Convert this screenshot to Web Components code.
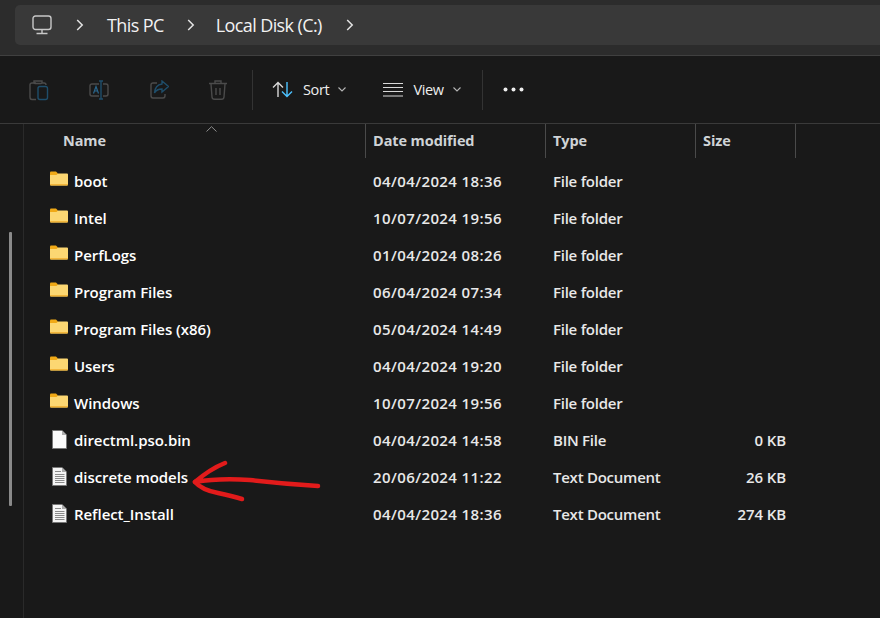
<!DOCTYPE html>
<html>
<head>
<meta charset="utf-8">
<style>
html, body { margin: 0; height: 100%; background: #191919; overflow: hidden; }
body { font-family: "Open Sans", "Noto Sans", "Liberation Sans", sans-serif; color: #fff; }
</style>
</head>
<body>
<explorer-window>
  <address-bar></address-bar>
  <command-bar></command-bar>
  <file-list>
    <file-row icon="folder" name="boot" date="04/04/2024 18:36" type="File folder"></file-row>
    <file-row icon="folder" name="Intel" date="10/07/2024 19:56" type="File folder"></file-row>
    <file-row icon="folder" name="PerfLogs" date="01/04/2024 08:26" type="File folder"></file-row>
    <file-row icon="folder" name="Program Files" date="06/04/2024 07:34" type="File folder"></file-row>
    <file-row icon="folder" name="Program Files (x86)" date="05/04/2024 14:49" type="File folder"></file-row>
    <file-row icon="folder" name="Users" date="04/04/2024 19:20" type="File folder"></file-row>
    <file-row icon="folder" name="Windows" date="10/07/2024 19:56" type="File folder"></file-row>
    <file-row icon="blank" name="directml.pso.bin" date="04/04/2024 14:58" type="BIN File" size="0 KB"></file-row>
    <file-row icon="text" name="discrete models" date="20/06/2024 11:22" type="Text Document" size="26 KB"></file-row>
    <file-row icon="text" name="Reflect_Install" date="04/04/2024 18:36" type="Text Document" size="274 KB"></file-row>
  </file-list>
  <red-arrow></red-arrow>
</explorer-window>

<script>
const chevron = `<svg width="8" height="12" viewBox="0 0 8 12" fill="none" stroke="#e4e4e4" stroke-width="1.5"><path d="M1.2 1 L6.2 6 L1.2 11"/></svg>`

class ExplorerWindow extends HTMLElement {
    constructor() {
        super();
        this.attachShadow({mode: 'open'});
        this.shadowRoot.innerHTML = `<style>
            :host { display: flex; flex-direction: column; width: 880px; height: 618px; position: relative; background: #191919; overflow: hidden; }
        </style><slot></slot>`
    }
}

class AddressBar extends HTMLElement {
    constructor() {
        super();
        this.attachShadow({mode: 'open'});
        this.shadowRoot.innerHTML = `<style>
            :host { display: block; padding: 5px 0 0 15px; background: #2c2c2c; border-bottom: 1px solid #404040; height: 50px; flex: none; }
            .bar { display: flex; align-items: center; height: 40px; background: #393939; border-radius: 5px 0 0 5px; font-size: 18px; letter-spacing: -0.6px; color: #f2f2f2; }
            .pc { margin-left: 17px; display: flex; }
            .c1 { margin-left: 24px; display: flex; }
            .t1 { margin-left: 23px; }
            .c2 { margin-left: 23px; display: flex; }
            .t2 { margin-left: 21px; }
            .c3 { margin-left: 24px; display: flex; }
        </style>
        <div class="bar">
            <span class="pc"><svg width="20" height="20" viewBox="0 0 20 20" fill="none" stroke="#c8c8c8" stroke-width="1.4"><rect x="1" y="1" width="18" height="13.5" rx="2.5"/><path d="M10 14.5 V18.5 M4.5 18.5 H15.5"/></svg></span>
            <span class="c1">${chevron}</span>
            <span class="t1">This PC</span>
            <span class="c2">${chevron}</span>
            <span class="t2">Local Disk (C:)</span>
            <span class="c3">${chevron}</span>
        </div>`
    }
}

class CommandBar extends HTMLElement {
    constructor() {
        super();
        this.attachShadow({mode: 'open'});
        this.shadowRoot.innerHTML = `<style>
            :host { display: flex; align-items: center; height: 67px; background: #191919; border-bottom: 1px solid #3a3a3a; font-size: 14.5px; letter-spacing: -0.35px; color: #eee; flex: none; }
            svg { display: block; flex: none; }
            .sep { width: 1px; height: 40px; background: #333; flex: none; }
            .i1 { margin-left: 29px; }
            .i2 { margin-left: 40px; }
            .i3 { margin-left: 41px; }
            .i4 { margin-left: 40px; }
            .s1 { margin-left: 25px; }
            .sort { margin-left: 19px; }
            .lbl { margin-left: 10px; }
            .car { margin-left: 9px; }
            .view { margin-left: 37px; }
            .s2 { margin-left: 21px; }
            .more { margin-left: 20px; }
        </style>
        <svg class="i1" width="20" height="22" viewBox="0 0 20 22" fill="none" stroke="#4b4b4b" stroke-width="1.4"><path d="M7 4 H3 Q1 4 1 6 V18 Q1 20.5 3 20.5 H7"/><path d="M5 3.5 V2 H13 V3.5 Q13 4.5 12 4.5 H6 Q5 4.5 5 3.5Z M13 4 H15 Q17 4 17 6"/><rect x="9" y="7.5" width="9.5" height="13" rx="2" stroke="#1f4e6b"/></svg>
        <svg class="i2" width="20" height="20" viewBox="0 0 20 20" fill="none" stroke="#4b4b4b" stroke-width="1.4"><path d="M10 4 H3 Q1 4 1 6 V14 Q1 16 3 16 H10 M14 4 H17 Q19 4 19 6 V14 Q19 16 17 16 H14"/><path d="M12 1 V19 M10 1 H14 M10 19 H14" stroke="#1f4e6b"/><path d="M4.5 13.5 L7 6.5 L9.5 13.5 M5.5 11 H8.5" stroke="#2a668c" stroke-width="1.2"/></svg>
        <svg class="i3" width="19" height="19" viewBox="0 0 19 19" fill="none" stroke="#4b4b4b" stroke-width="1.4"><path d="M7 3 H3 Q1 3 1 5 V15.5 Q1 18 3 18 H13 Q15 18 15 15.5 V14"/><path d="M12 1 L18.5 6.5 L12 12 V9 Q6.5 9 4.5 13 Q5 5 12 4 Z" stroke="#1f4e6b"/></svg>
        <svg class="i4" width="18" height="20" viewBox="0 0 18 20" fill="none" stroke="#4b4b4b" stroke-width="1.4"><path d="M0 3.5 H18 M6 3 V1 H12 V3 M2 4 L3 17 Q3.2 19.3 5.5 19.3 H12.5 Q14.8 19.3 15 17 L16 4 M7 8 V15 M11 8 V15"/></svg>
        <span class="sep s1"></span>
        <svg class="sort" width="21" height="17" viewBox="0 0 21 17" fill="none" stroke-width="1.4"><path d="M6 16 V1.5 M1 6.5 L6 1.5 L11 6.5" stroke="#d8d8d8"/><path d="M15 1 V15.5 M10 10.5 L15 15.5 L20 10.5" stroke="#4cc2ff"/></svg>
        <span class="lbl">Sort</span>
        <svg class="car" width="8" height="5" viewBox="0 0 8 5" fill="none" stroke="#b5b5b5" stroke-width="1.1"><path d="M.5 .5 L4 4 L7.5 .5"/></svg>
        <svg class="view" width="20" height="14" viewBox="0 0 20 14" fill="none" stroke="#d8d8d8" stroke-width="1"><path d="M0 .5 H20 M0 4.5 H20 M0 8.5 H20 M0 13 H20" /></svg>
        <span class="lbl">View</span>
        <svg class="car" width="8" height="5" viewBox="0 0 8 5" fill="none" stroke="#b5b5b5" stroke-width="1.1"><path d="M.5 .5 L4 4 L7.5 .5"/></svg>
        <span class="sep s2"></span>
        <svg class="more" width="21" height="5" viewBox="0 0 21 5" fill="#eee"><circle cx="2.5" cy="2.5" r="2"/><circle cx="10.5" cy="2.5" r="2"/><circle cx="18.5" cy="2.5" r="2"/></svg>`
    }
}

class FileList extends HTMLElement {
    constructor() {
        super();
        this.attachShadow({mode: 'open'});
        this.shadowRoot.innerHTML = `<style>
            :host { display: flex; flex: 1; min-height: 0; }
            .rail { width: 23px; flex: none; border-right: 1px solid #2a2a2a; position: relative; }
            .thumb { position: absolute; left: 9px; top: 108px; width: 3px; height: 274px; background: #8a8a8a; border-radius: 1px; }
            .main { flex: 1; min-width: 0; }
            .head { display: grid; grid-template-columns: 342px 180px 150px 100px; height: 33px; font-size: 14.5px; font-weight: 700; letter-spacing: -0.1px; color: #cfd3d6; position: relative; margin-bottom: 5px; }
            .head div { border-right: 1px solid #4a4a4a; padding-left: 7px; line-height: 34px; }
            .head .name { padding-left: 39px; }
            .sortmark { position: absolute; left: 182px; top: 2px; display: block; }
        </style>
        <div class="rail"><div class="thumb"></div></div>
        <div class="main">
            <div class="head">
                <div class="name">Name</div><div>Date modified</div><div>Type</div><div>Size</div>
                <svg class="sortmark" width="11" height="6" viewBox="0 0 11 6" fill="none" stroke="#8f8f8f"><path d="M.5 5.5 L5.5 .7 L10.5 5.5"/></svg>
            </div>
            <slot></slot>
        </div>`
    }
}

const icons = {
    folder: `<svg width="18" height="15" viewBox="0 0 18 15"><path d="M0 1.5 Q0 .5 1 .5 H6 L8 2.5 V5 H0Z" fill="#f0a916"/><path d="M0 4 H6.5 L8 2.5 H17 Q18 2.5 18 3.5 V13.5 Q18 14.5 17 14.5 H1 Q0 14.5 0 13.5Z" fill="#fcd772"/><path d="M0 13 H18 V13.5 Q18 14.5 17 14.5 H1 Q0 14.5 0 13.5Z" fill="#f2b53a"/></svg>`,
    blank: `<svg width="15" height="19" viewBox="0 0 15 19"><path d="M.5 .5 H10 L14.5 5 V18.5 H.5Z" fill="#fbfbfb" stroke="#777"/><path d="M10 .5 V5 H14.5Z" fill="#b0b0b0"/></svg>`,
    text: `<svg width="15" height="19" viewBox="0 0 15 19"><path d="M.5 .5 H10 L14.5 5 V18.5 H.5Z" fill="#f4f4f4" stroke="#777"/><path d="M10 .5 V5 H14.5Z" fill="#aaa"/><path d="M3 4.5 H9 M3 7.5 H12.5 M3 9.5 H12.5 M3 11.5 H12.5 M3 13.5 H12.5 M3 15.5 H12.5" stroke="#8a8a8a"/></svg>`
}

class FileRow extends HTMLElement {
    constructor() {
        super();
        this.attachShadow({mode: 'open'});
    }
    connectedCallback() {
        let kind = this.getAttribute('icon')
        this.shadowRoot.innerHTML = `<style>
            :host { display: grid; grid-template-columns: 342px 180px 150px 90px; height: 37px; align-items: center; font-size: 15px; font-weight: 600; letter-spacing: -0.05px; color: #e8e8e8; }
            .name { display: flex; align-items: center; padding-left: 26px; color: #fff; }
            .ico { width: 25px; display: flex; flex: none; }
            .ico.folder { transform: translateY(-2px); }
            .ico.doc { padding-left: 2px; width: 23px; }
            .name span:last-child { margin-left: -1px; }
            .date { padding-left: 7px; letter-spacing: .4px; }
            .type { padding-left: 7px; letter-spacing: -.25px; }
            .size { text-align: right; letter-spacing: -.1px; }
        </style>
        <div class="name"><span class="ico ${kind === 'folder' ? 'folder' : 'doc'}">${icons[kind]}</span><span>${this.getAttribute('name')}</span></div>
        <div class="date">${this.getAttribute('date')}</div>
        <div class="type">${this.getAttribute('type')}</div>
        <div class="size">${this.getAttribute('size') || ''}</div>`
    }
}

// hand drawn annotation, sits over the list
class RedArrow extends HTMLElement {
    constructor() {
        super();
        this.attachShadow({mode: 'open'});
        this.shadowRoot.innerHTML = `<style>
            :host { position: absolute; left: 190px; top: 458px; width: 135px; height: 46px; display: block; }
        </style>
        <svg width="135" height="46" viewBox="0 0 135 46" fill="none" stroke="#e21b1b" stroke-width="4.5" stroke-linecap="round" stroke-linejoin="round">
            <path d="M35 5 Q20 11 5 24 Q28 20 60 22 Q95 26 128 28"/>
            <path d="M5 24 Q12 32 28 35 Q42 38 52 41"/>
        </svg>`
    }
}

window.customElements.define('explorer-window', ExplorerWindow)
window.customElements.define('address-bar', AddressBar)
window.customElements.define('command-bar', CommandBar)
window.customElements.define('file-list', FileList)
window.customElements.define('file-row', FileRow)
window.customElements.define('red-arrow', RedArrow)
</script>
</body>
</html>
